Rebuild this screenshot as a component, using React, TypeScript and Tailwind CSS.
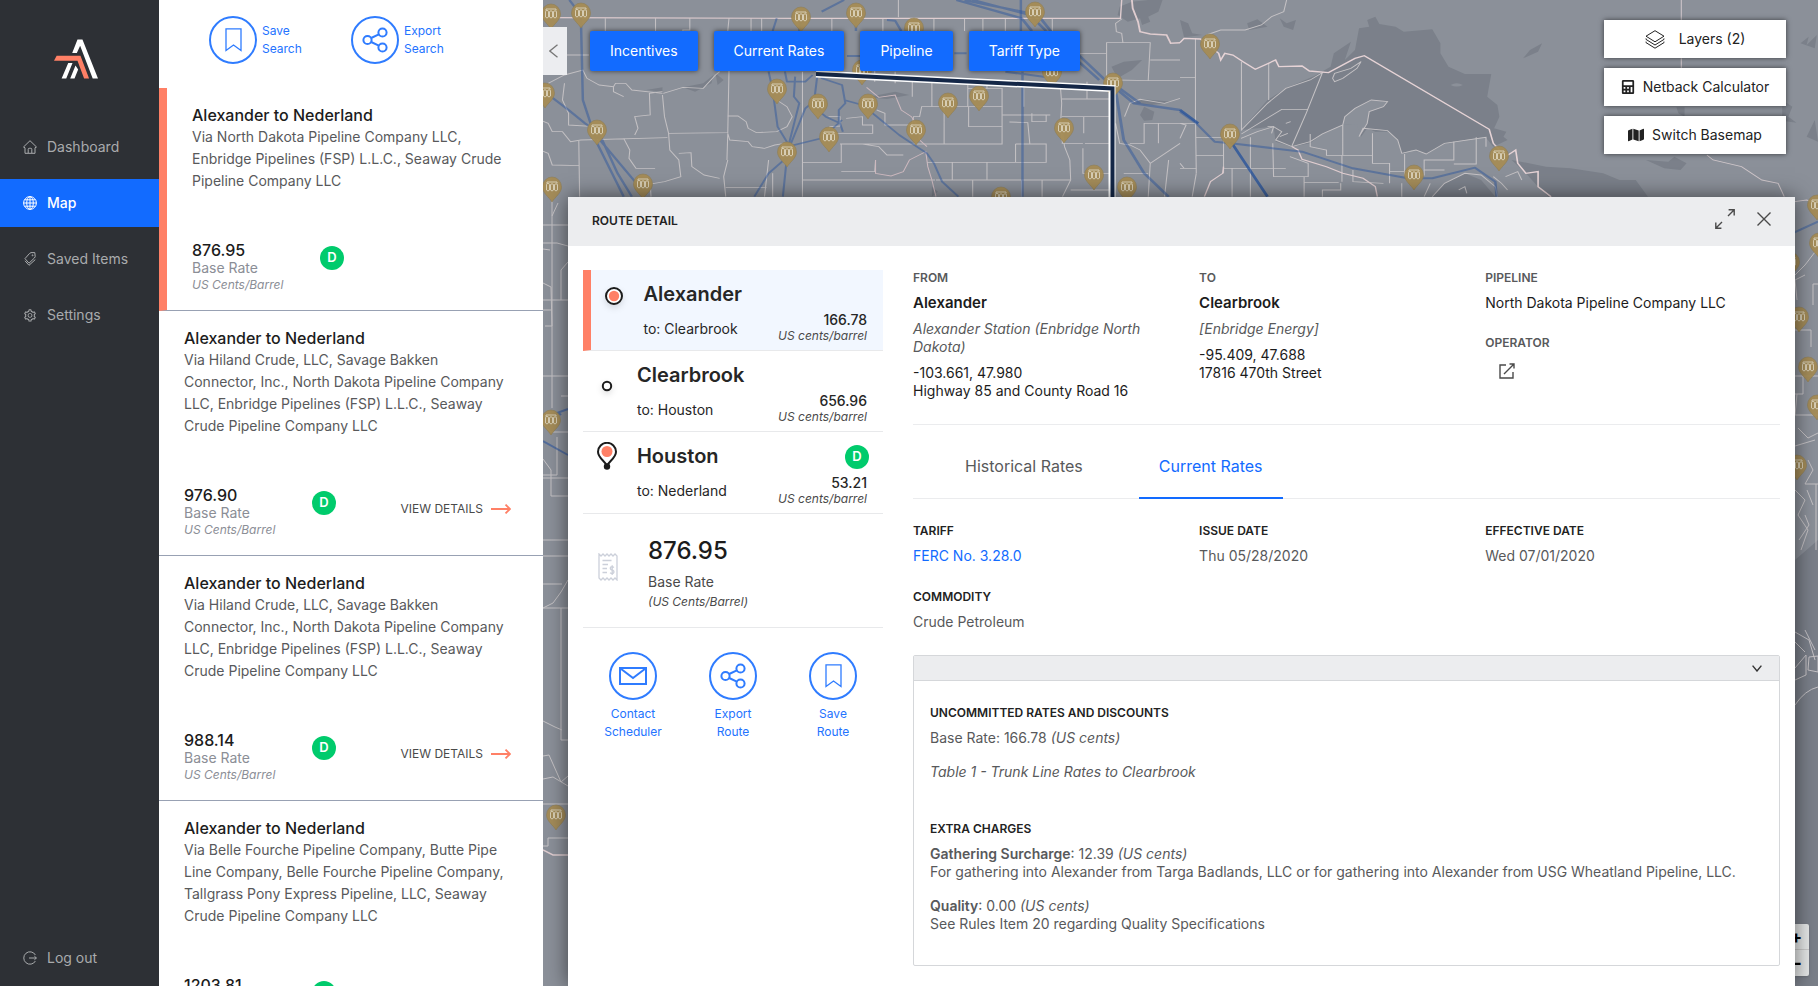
import React, { useState } from 'react';
import { FaCalculator, FaMap } from 'react-icons/fa';
import { AiOutlineSetting } from 'react-icons/ai';

interface RouteItem {
  id: number;
  title: string;
  via: string;
  rate: string;
}

const ROUTES: RouteItem[] = [
  {
    id: 1,
    title: 'Alexander to Nederland',
    via: 'Via North Dakota Pipeline Company LLC, Enbridge Pipelines (FSP) L.L.C., Seaway Crude Pipeline Company LLC',
    rate: '876.95',
  },
  {
    id: 2,
    title: 'Alexander to Nederland',
    via: 'Via Hiland Crude, LLC, Savage Bakken Connector, Inc., North Dakota Pipeline Company LLC, Enbridge Pipelines (FSP) L.L.C., Seaway Crude Pipeline Company LLC',
    rate: '976.90',
  },
  {
    id: 3,
    title: 'Alexander to Nederland',
    via: 'Via Hiland Crude, LLC, Savage Bakken Connector, Inc., North Dakota Pipeline Company LLC, Enbridge Pipelines (FSP) L.L.C., Seaway Crude Pipeline Company LLC',
    rate: '988.14',
  },
  {
    id: 4,
    title: 'Alexander to Nederland',
    via: 'Via Belle Fourche Pipeline Company, Butte Pipe Line Company, Belle Fourche Pipeline Company, Tallgrass Pony Express Pipeline, LLC, Seaway Crude Pipeline Company LLC',
    rate: '1203.81',
  },
];

// Terminal positions on the map canvas
const PINS: [number, number][] = [
  [8, 14], [38, 13], [258, 17], [313, 13], [371, 28], [492, 12], [234, 89], [275, 104],
  [325, 104], [319, 70], [405, 103], [436, 96], [570, 83], [509, 72], [54, 130], [373, 130],
  [521, 128], [286, 137], [244, 152], [100, 184], [9, 187], [551, 175], [584, 187], [458, 197],
  [2, 93], [667, 44], [687, 134], [956, 156], [871, 175], [1274, 205], [1276, 243], [1247, 262],
  [1256, 317], [1265, 367], [1274, 405], [1254, 465], [8, 420], [13, 815],
];

/* ---------- Icons ---------- */

const Logo = () => (
  <svg width="44" height="40" viewBox="162 57 133 118" aria-hidden="true">
    <path fill="#fff" d="M217 98 L233 57 H248 L295 175 H279 L241 76 L231 98 Z" />
    <path fill="#ff8066" d="M162 121 L170 106 H242 L268 175 H253 L233 121 Z" />
    <path fill="#fff" d="M185 175 L205 128 H218 L199 175 Z M211 175 L227 136 L235 148 L224 175 Z" />
  </svg>
);

const HomeIcon = () => (
  <svg width="14" height="14" viewBox="0 0 14 14" fill="none" stroke="currentColor" aria-hidden="true">
    <path d="M.5 7 L7 .7 L13.5 7 L12 7.8 V13.3 H2 V7.8 Z" />
    <path d="M5.2 13 V9.3 Q5.2 8.3 6.2 8.3 H7.8 Q8.8 8.3 8.8 9.3 V13" />
  </svg>
);

const GlobeIcon = () => (
  <svg width="14" height="14" viewBox="0 0 14 14" fill="none" stroke="currentColor" aria-hidden="true">
    <circle cx="7" cy="7" r="6.4" />
    <ellipse cx="7" cy="7" rx="3.3" ry="6.4" />
    <path d="M7 .6 V13.4 M.6 7 H13.4 M1.6 3.8 H12.4 M1.6 10.2 H12.4" />
  </svg>
);

const TagsIcon = () => (
  <svg width="14" height="14" viewBox="0 0 14 14" fill="none" stroke="currentColor" aria-hidden="true">
    <path d="M6.4 1.6 L8 .6 H11.8 L12.2 4.6 L11.4 6 L6 11.2 L2 6.6 Z" />
    <path d="M2 8.8 L6 13.3 L12.3 7.6" />
    <circle cx="9.6" cy="3.3" r=".5" />
  </svg>
);

const LogoutIcon = () => (
  <svg width="14" height="14" viewBox="0 0 14 14" fill="none" stroke="currentColor" aria-hidden="true">
    <path d="M12.4 4 A6.2 6.2 0 1 0 12.4 10 M6 7 H13.4 M11.4 5.2 L13.4 7 L11.4 8.8" />
  </svg>
);

const BookmarkIcon = () => (
  <svg width="17" height="24" viewBox="0 0 17 24" fill="none" stroke="currentColor" strokeWidth="1.3" aria-hidden="true">
    <path d="M1 .8 H16 V22.5 L8.5 17 L1 22.5 Z" />
  </svg>
);

const ShareIcon = () => (
  <svg width="26" height="26" viewBox="0 0 26 26" fill="none" stroke="currentColor" strokeWidth="2" aria-hidden="true">
    <circle cx="5.5" cy="13" r="4.1" />
    <circle cx="20.5" cy="5.5" r="4.1" />
    <circle cx="20.5" cy="20.5" r="4.1" />
    <path d="M9.2 11 L16.8 7.4 M9.2 15 L16.8 18.6" />
  </svg>
);

const MailIcon = () => (
  <svg width="28" height="18" viewBox="0 0 28 18" fill="none" stroke="currentColor" strokeWidth="2" aria-hidden="true">
    <path d="M1 1 H27 V17 H1 Z M1.5 1.5 L14 11 L26.5 1.5" />
  </svg>
);

const ArrowIcon = () => (
  <svg width="20" height="10" viewBox="0 0 20 10" fill="none" stroke="#ff8066" strokeWidth="1.8" aria-hidden="true">
    <path d="M0 5 H19 M14.5 .6 L19 5 L14.5 9.4" />
  </svg>
);

const LayersIcon = () => (
  <svg width="20" height="19" viewBox="0 0 20 19" fill="none" stroke="currentColor" aria-hidden="true">
    <path d="M10 .7 L19 6.2 L10 11.8 L1 6.2 Z" />
    <path d="M1 8.4 L1 9.4 L10 15 L19 9.4 L19 8.4 M1 11.6 L1 12.6 L10 18.2 L19 12.6 L19 11.6" />
  </svg>
);

const ExpandIcon = () => (
  <svg width="20" height="20" viewBox="0 0 20 20" fill="none" stroke="#4a4a4a" strokeWidth="1.4" aria-hidden="true">
    <path d="M13 7 L19 1 M13.6 .8 H19.2 V6.4 M7 13 L1 19 M.8 13.6 V19.2 H6.4" />
  </svg>
);

const CloseIcon = () => (
  <svg width="14" height="14" viewBox="0 0 14 14" fill="none" stroke="#4a4a4a" strokeWidth="1.4" aria-hidden="true">
    <path d="M.5 .5 L13.5 13.5 M13.5 .5 L.5 13.5" />
  </svg>
);

const ExternalIcon = () => (
  <svg width="16" height="16" viewBox="0 0 16 16" fill="none" stroke="#4a4a4a" strokeWidth="1.4" aria-hidden="true">
    <path d="M7 2 H1 V15 H14 V9 M5 11 L15 1 M10.5 1 H15 V5.5" />
  </svg>
);

const ReceiptIcon = () => (
  <svg width="20" height="28" viewBox="0 0 20 28" fill="none" stroke="#ccd0da" strokeWidth="1.3" aria-hidden="true">
    <path d="M1 1 L3 3 L5 1 L7 3 L9 1 L11 3 L13 1 L15 3 L17 1 L19 3 V27 L17 25 L15 27 L13 25 L11 27 L9 25 L7 27 L5 25 L3 27 L1 25 Z" />
    <path d="M4.5 7.5 H13.5 M4.5 11.5 H10 M4.5 15.5 H9 M4.5 19.5 H9" />
    <path d="M16 14.5 Q13.5 12.8 12.4 14.6 Q12 16.5 14 17 Q16.4 17.6 15.8 19.6 Q14.5 21.4 12 19.8 M14.2 12.3 V22" />
  </svg>
);

const StartMarker = () => (
  <svg width="22" height="22" viewBox="0 0 22 22" className="drop-shadow-md" aria-hidden="true">
    <circle cx="11" cy="11" r="8" fill="#fff" stroke="#1c1c1c" strokeWidth="2" />
    <circle cx="11" cy="11" r="5.2" fill="#ff8066" />
  </svg>
);

const StopMarker = () => (
  <svg width="12" height="12" viewBox="0 0 12 12" className="drop-shadow-md" aria-hidden="true">
    <circle cx="6" cy="6" r="4.2" fill="#fff" stroke="#1c1c1c" strokeWidth="2" />
  </svg>
);

const EndMarker = () => (
  <svg width="20" height="28" viewBox="0 0 20 28" aria-hidden="true">
    <path
      d="M10 24 C8 19 1 16 1 9.8 A9 9 0 0 1 19 9.8 C19 16 12 19 10 24 Z"
      fill="#fff"
      stroke="#1c1c1c"
      strokeWidth="2"
    />
    <circle cx="10" cy="9.5" r="5.5" fill="#ff8066" />
    <circle cx="10" cy="24.5" r="3.2" fill="#1c1c1c" />
  </svg>
);

/* ---------- Map ---------- */

const MapCanvas = () => (
  <svg
    className="absolute inset-0 h-full w-full"
    viewBox="0 0 1275 986"
    preserveAspectRatio="xMinYMin slice"
    fill="none"
    aria-hidden="true"
  >
    <defs>
      <g id="pin">
        <path d="M0 15 C-3 10 -9.5 6 -9.5 0 A9.5 10 0 0 1 9.5 0 C9.5 6 3 10 0 15 Z" fill="#a58c55" fillOpacity=".95" stroke="#8f7d55" strokeWidth=".6" />
        <path
          d="M-5 -3.5 V-5 H5 V-3.5 M-5.5 -2.5 Q-5.5 -3.5 -4 -3.5 Q-2.5 -3.5 -2.5 -2.5 V3 Q-4 5 -5.5 3 Z M-1.5 -2.5 Q0 -4 1.5 -2.5 V3 Q0 5 -1.5 3 Z M2.5 -2.5 Q4 -4 5.5 -2.5 V3 Q4 5 2.5 3 Z"
          stroke="#ddd5bd"
          strokeWidth=".9"
        />
      </g>
    </defs>
    <rect width="1275" height="986" fill="#8b9099" />

    {/* Lakes */}
    <g transform="translate(637 0) scale(.4069 .3333)" fill="#7b808a">
      <path d="M150 390 L215 300 L260 265 L330 228 L370 200 L378 160 L420 125 L405 180 L430 150 L440 85 L465 80 L460 60 L480 50 L490 72 L530 80 L550 95 L620 88 L640 130 L640 160 L660 200 L700 222 L765 222 L755 290 L780 315 L785 350 L772 385 L802 395 L795 410 L805 420 L770 440 L750 410 L672 425 L650 432 L605 462 L570 450 L545 460 L535 420 L510 395 L480 395 L460 385 L445 410 L440 370 L400 375 L350 402 L320 430 L275 440 L235 425 L230 380 Z" />
      <path d="M815 480 L900 500 L960 505 L1040 520 L1080 540 L1120 540 L1150 590 L905 590 L880 560 L850 520 Z" />
      <path d="M620 590 L650 550 L700 520 L740 540 L775 590 Z" />
      <path d="M843 175 L860 150 L890 130 L880 155 Z M1145 480 L1200 485 L1215 470 L1245 490 L1230 510 L1190 505 Z M0 60 L20 70 L30 100 L55 105 L10 112 Z M165 70 L190 58 L215 80 L170 90 Z M245 55 L262 70 L285 60 L278 90 L255 80 Z M1525 130 L1545 110 L1540 135 L1565 105 L1560 145 Z M1480 300 L1505 320 L1495 350 L1515 368 L1480 362 Z M1540 410 L1560 360 L1568 425 Z M1220 322 H1240 V350 L1225 340 Z" />
    </g>
    <g transform="translate(637 0) scale(.4069 .3333)" fill="#8b9099">
      <path d="M405 350 L430 325 L470 300 L510 305 L500 320 L465 335 L460 370 L440 410 L436 372 L400 375 Z M665 255 Q680 245 695 255 Q680 264 665 255 Z" />
    </g>
    <g transform="translate(-3 0) scale(.4082 .3333)" fill="#7b808a">
      <path d="M1420 20 L1450 5 L1490 0 H1525 L1515 35 L1490 50 L1495 65 L1475 75 L1470 55 L1440 65 L1415 45 Z M1400 200 L1430 185 L1475 180 L1450 210 L1415 235 Z M1470 345 L1480 320 L1505 335 L1500 360 L1480 362 Z M1445 310 L1480 298 L1550 305 L1500 315 Z" />
      <path d="M260 270 L300 262 L300 275 Z M350 262 L400 250 L425 225 L420 250 L380 275 Z M800 292 L870 275 L905 285 L850 297 Z M960 560 L975 575 L960 590 Z M430 220 L450 240 L435 255 Z" />
    </g>
    <path d="M1252 560 L1275 540 V986 H1252 Z" fill="#7a7f89" />

    {/* County lines, west */}
    <g transform="translate(-3 0) scale(.4082 .3333)" stroke="#c3c0c3" strokeWidth="2.6">
      <path d="M160 55 V110 L210 112 M283 55 V93 M367 55 V90 H350 V93 M463 55 L460 93 M517 55 V93 M543 55 V93 M715 55 V93 M840 55 V93 M965 55 V93 M1040 55 V93 M878 0 V52 M1085 55 V93 M1140 55 V93 M1255 55 V93" />
      <path d="M0 165 H120 M20 250 L60 225 L105 210 L115 235 L145 255 L180 260 L185 250 L210 250 L225 270 L300 280 M60 250 L55 300 L70 340 L70 375 L135 380 M180 260 V275 L205 290 M232 405 L240 385 L232 350 L270 345 L268 280 L300 275" />
      <path d="M300 285 L305 350 L315 400 L460 398 L463 212 M315 400 L318 450 L340 480 L345 530 L305 545 L270 552 L272 590 M0 360 L20 370 L30 395 L55 395 L75 425 L100 420 L312 413 M95 420 L97 590 M0 450 L20 460 L30 495 L97 497 M205 415 L220 450 L218 475 L235 505 L282 505 M340 460 L370 458 L372 500 L402 525 L440 535" />
      <path d="M302 280 L350 262 L400 265 L430 225 L440 215 M460 348 H485 L505 365 L510 385 L530 398 L580 395 L605 380 L618 350 L605 320 L580 300 M460 400 L465 420 L510 425 L520 440 L550 445 L575 435 L600 430 M460 480 L450 530 L455 590 M550 590 L560 480 M555 562 L455 562 M570 590 V520 M460 400 L458 480" />
      <path d="M643 215 V590 M643 540 H968 M643 487 H738 V432 M738 515 H820 L822 480 M707 350 L735 350 V378 L710 380 L705 400 H815 V375 L790 375 V350 L750 355 M752 432 H1132 V320 H935 L930 350 H915 L912 375 H845 V340 L825 330 M735 432 H790 L830 440 L850 465 L890 465" />
      <path d="M822 480 V520 L860 528 L890 515 L905 480 L945 455 L950 500 L960 540 L970 590 M800 262 L830 292 L870 285 L885 330 L910 350 L925 380 L930 420 L948 440" stroke="#cdb9bf" />
      <path d="M1132 320 V265 L1048 265 M1132 380 L1050 380 V320 M990 320 V432 M1048 245 V320 M948 487 H1170 M1010 487 V540 M1095 487 V540 M1165 432 V487 H1240 V432 H1165 M970 540 H1300 M1150 366 L1195 368 L1200 432 M1205 340 V365 H1240 L1240 345 M1132 345 H1250 M1180 540 V590 M1230 540 V590 M1060 540 V590 M1250 245 L1275 262 L1278 310 L1275 380 L1280 430" />
      <path d="M1280 400 L1285 440 L1298 480 L1300 540 L1280 590 M1278 350 H1395 M1278 297 H1395 M1332 350 V400 M1335 430 H1395 M1330 445 V520 H1395 M1278 430 H1330 M1340 245 V295 M1300 570 H1395 M1340 297 V260" />
      <path d="M1410 240 L1490 242 L1495 128 L1388 128 V245 M1425 57 L1410 70 L1412 95 L1425 100 L1428 128 M1490 242 H1568 M1495 180 H1568 M1445 430 H1480 V370 H1568 M1410 370 L1420 430 L1445 435 L1470 450 L1495 490 L1568 430 M1495 490 L1490 590 M1432 350 L1445 310 L1470 298 L1530 310 L1568 295 M1430 520 H1490 M1515 370 V430 M1540 480 L1530 590" />
      <path d="M820 200 V245 M870 215 V250 M912 235 V290 M960 235 V320 M1095 245 V265 M1185 255 V320 M1320 160 H1350 L1388 160" />
      {/* International border */}
      <path d="M0 53 L640 55 L1422 55 L1425 0" stroke="#e0cdd0" strokeWidth="3.4" />
      <path d="M1450 0 L1452 25 L1465 65 L1470 95 L1495 102 L1535 105 L1545 130 L1568 128" stroke="#e0cdd0" strokeWidth="4.5" />
    </g>

    {/* Great lakes area */}
    <g transform="translate(637 0) scale(.4069 .3333)" stroke="#c5c2c5" strokeWidth="2.6">
      <path d="M65 105 L100 90 L160 90 L200 75 L225 50 L255 35 L262 0 M38 115 V350 L40 520 M0 233 H38 M151 185 V390 L215 310 L260 265 L320 240 L350 218 L310 340 L275 438 M218 190 V300 M151 402 L250 328 H315 M40 412 H107 V520 M40 466 H107 M0 370 H40 M0 370 L15 375 L0 415" />
      <path d="M150 415 L190 395 L230 380 L250 395 L235 420 L275 440 L320 425 L350 402 L400 375 L405 350 L430 325 L470 300 L510 305 L500 320 L465 335 L460 370 L440 410 L450 385 L510 392 L535 420 L545 460 L580 450 L605 462 L650 430 L752 412 V440" />
      <path d="M320 402 V440 L360 450 V466 H473 V400 M400 375 L400 466 M398 466 V545 M473 466 V490 H515 V550 M552 462 V525 H600 V480 H673 V425 M728 412 V492 H673 M600 480 V510 H650 M228 430 L230 530 H315 V490 L270 470 M173 412 V590 M107 505 H260 M128 505 V590 M305 530 V590 M305 547 H390 M40 505 H0 M40 520 L30 590 M0 490 L10 505 M350 590 V570 H395 V550" />
      <path d="M425 510 V545 L500 550 M515 515 L560 515 M545 550 V590 M375 235 L380 220 L420 205 L445 185 L435 205 L400 235 L380 245 Z M620 590 L650 550 L700 520 L740 525 L775 560 L780 590 M685 570 L700 560 L705 580 M600 590 L615 550 M800 530 L830 515 L840 540 M770 530 L790 550 L805 570 M215 380 H230 L225 400 M260 370 L272 365 M245 410 L265 400" />
      <path d="M1232 0 V60 M1232 175 V205 M1295 465 L1310 480 L1380 500 L1430 540 L1470 550 L1485 590 M1510 605 L1540 600 L1568 612" stroke="#cfc6ca" />
      <path d="M107 500 L105 520 L75 545 L60 590 M275 440 L290 450 L300 478 L360 500 L400 520 L450 535 L480 560 L485 590" stroke="#e0cdd0" strokeWidth="3.4" />
      <path d="M0 128 L10 115 L50 117 L95 160 L100 180 L110 160 L130 165 L155 185 L185 208 L235 180 L243 200 L300 198 L318 213 L365 218 L430 175 L453 167 L760 388 L770 430 L800 470 L825 450 L830 490 L850 520 L880 515 L880 560 L912 590" stroke="#e6d3d6" strokeWidth="4" />
    </g>

    {/* West strip */}
    <g stroke="#c5c2c5" strokeWidth="1">
      <path d="M9 200 V408 M9 216 L15 203 M0 225 H25 M0 243 H14 L25 246 M0 300 H25 M0 310 H9 M0 249 L7 250 M0 283 L8 287 L9 326 H2 M0 376 H25 M18 396 H25 M0 424 L8 432 H25 M14 437 V475 H0 M0 459 L8 470 V496 H25 M0 478 H25 M0 540 H25 M0 556 H25 M0 584 H19 M0 608 L10 603 L18 592 L25 580 M0 608 H25 M18 608 V740 H25 M0 721 L12 727 L19 730 M0 756 L6 755 L18 782 L25 776 M0 779 L10 777 L25 786 M0 804 H25 M0 846 H5 V838 H25 M18 300 V270 L25 262" />
      <path d="M0 850 L10 855 H25" stroke="#e0cdd0" strokeWidth="1.4" />
    </g>

    {/* East strip */}
    <g stroke="#c5c2c5" strokeWidth="1">
      <path d="M1252 275 L1262 265 L1272 252 M1252 330 H1268 V347 M1252 376 H1275 M1260 376 V394 H1252 M1254 394 L1252 415 H1275 M1255 428 L1265 438 L1275 433 M1252 446 L1272 440 M1265 460 L1270 470 L1262 484 H1275 M1270 305 V284 H1275 M1254 300 L1252 280 L1262 275 M1273 484 V550 M1252 490 L1262 500 L1255 515 L1265 530 L1258 550 M1264 490 L1270 505 M1256 540 L1266 525 L1262 515" />
      <path d="M1252 632 L1266 640 L1272 660 M1252 642 L1262 652 M1262 630 L1272 650 M1252 668 L1263 655 V675 L1252 680 M1266 657 L1275 656 V672 L1265 670 Z M1252 705 Q1262 690 1275 687" />
    </g>

    {/* Pipelines */}
    <g transform="translate(-3 0) scale(.4082 .3333)" stroke="#2f579e" strokeOpacity=".5" strokeWidth="5" strokeLinejoin="round">
      <path d="M72 0 L100 45 L105 300 L140 430 L205 590 M0 265 L70 330 L110 370 L145 400 L190 520 L225 590 M140 410 L250 570" strokeWidth="6" />
      <path d="M580 55 L570 93 M560 215 L570 270 L582 380 L607 430 L605 470 M607 470 L560 520 L525 590 M605 470 L595 590 M605 460 L650 325 L685 290 M625 230 L622 290 L635 310 L605 455 M600 215 L605 245 H650 L668 225 M680 220 L670 320 L700 350 L735 370 L742 395 M690 215 V235 L740 255 L748 310 L732 330 V370 M745 300 L790 315 L825 350 L880 405 L948 460 L965 490 L985 545 L1025 590 M607 440 L640 430 L690 415 L740 360" />
      <path d="M690 35 L745 0 M774 45 V93 M850 60 L870 62 L885 93 M752 168 H785 M1015 160 H1045 M1178 0 V93 M1182 215 V590 M1140 215 L1260 235 M640 55 L635 93" strokeWidth="6" />
      <path d="M1020 0 L1180 55 L1205 93 M1060 0 L1200 45 L1240 93 M1040 0 L1220 45 L1262 110 M1315 160 L1380 235 L1410 260 M1315 180 L1370 240 M1405 260 L1455 310 L1568 330 M1410 270 L1430 420 L1480 520 L1540 590 M1420 265 L1470 310" strokeWidth="7" />
    </g>
    <g transform="translate(637 0) scale(.4069 .3333)" stroke="#2f579e" strokeOpacity=".5" strokeLinejoin="round">
      <path d="M0 335 L40 370 L85 425 L125 430 L300 455 L425 505 L560 535 H620 L725 503 L775 545 L778 590 M1510 697 L1568 665" strokeWidth="6" />
      <path d="M0 330 L45 370 M125 425 L215 590" strokeWidth="7" stroke="#23509b" strokeOpacity=".75" />
    </g>
    <path d="M0 418 L25 409 M0 441 L25 455 M5 425 Q12 408 18 415" stroke="#2f579e" strokeOpacity=".6" strokeWidth="2" />

    {PINS.map(([x, y]) => (
      <use key={`${x}-${y}`} href="#pin" x={x} y={y} />
    ))}

    {/* Selected route */}
    <path d="M273 74 L569 88.500 V200" stroke="#fff" strokeWidth="7" />
    <path d="M273 74 L569.500 88.500 V200" stroke="#142747" strokeWidth="4" />
  </svg>
);

/* ---------- Shared pieces ---------- */

const DiscountBadge: React.FC<{ className?: string }> = ({ className = '' }) => (
  <span
    className={`flex h-6 w-6 shrink-0 items-center justify-center rounded-full bg-[#00cb6c] text-[13px] font-semibold text-white ${className}`}
  >
    D
  </span>
);

const IconCircle: React.FC<{ children: React.ReactNode }> = ({ children }) => (
  <span className="flex h-12 w-12 shrink-0 items-center justify-center rounded-full border-2 border-[#2f7cff] text-[#2f7cff]">
    {children}
  </span>
);

const Field: React.FC<{ label: string; muted?: boolean; children: React.ReactNode }> = ({
  label,
  muted = false,
  children,
}) => (
  <div>
    <h3 className={`text-xs font-semibold uppercase ${muted ? 'text-[#58595b]' : 'text-[#222]'}`}>{label}</h3>
    {children}
  </div>
);

/* ---------- Sidebar ---------- */

const NAV = [
  { label: 'Dashboard', icon: <HomeIcon /> },
  { label: 'Map', icon: <GlobeIcon />, active: true },
  { label: 'Saved Items', icon: <TagsIcon /> },
  { label: 'Settings', icon: <AiOutlineSetting size={15} /> },
];

const Sidebar = () => (
  <aside className="flex w-[159px] shrink-0 flex-col bg-[#2d3035] pb-1 text-sm text-[#a9abad]">
    <a href="#home" aria-label="Home" className="mb-11 flex justify-center pt-[39px] pr-[7px]">
      <Logo />
    </a>
    <nav className="flex flex-col gap-2">
      {NAV.map((item) => (
        <a
          key={item.label}
          href="#nav"
          className={`flex h-12 items-center gap-2.5 pl-[23px] ${item.active ? 'bg-[#126bff] font-medium text-white' : ''}`}
        >
          <span className="flex w-3.5 justify-center">{item.icon}</span>
          {item.label}
        </a>
      ))}
    </nav>
    <a href="#logout" className="mt-auto flex h-12 items-center gap-2.5 pl-[23px]">
      <LogoutIcon />
      Log out
    </a>
  </aside>
);

/* ---------- Results list ---------- */

const RouteCard: React.FC<{ route: RouteItem; selected: boolean; onSelect: () => void }> = ({
  route,
  selected,
  onSelect,
}) => (
  <li
    className={`border-b border-b-[#98a1b3] py-4 pr-8 pl-[25px] ${selected ? 'border-l-8 border-l-[#ff8066]' : ''}`}
  >
    <h2 className="text-base leading-[22px] font-medium text-[#1c1c1c]">{route.title}</h2>
    <p className="text-sm leading-[22px] text-[#58595b]">{route.via}</p>
    <div className="mt-12 flex">
      <div className="w-32">
        <div className="text-base leading-5 font-medium text-[#1c1c1c]">{route.rate}</div>
        <div className="text-sm leading-4 text-[#8b8e96]">Base Rate</div>
        <div className="text-xs leading-[18px] text-[#8b8e96] italic">US Cents/Barrel</div>
      </div>
      <DiscountBadge className="mt-1.5" />
      {!selected && (
        <button type="button" onClick={onSelect} className="ml-auto flex h-12 items-center gap-2 text-xs text-[#4a4a4a]">
          VIEW DETAILS
          <ArrowIcon />
        </button>
      )}
    </div>
  </li>
);

const RouteList = () => {
  const [selected, setSelected] = useState(1);

  return (
    <section className="relative flex w-96 shrink-0 flex-col overflow-hidden bg-white">
      <div className="flex shrink-0 gap-[46px] pt-4 pb-6 pl-[50px] text-xs leading-[18px] text-[#2373ff]">
        <button type="button" className="flex w-24 items-center gap-[5px] text-left">
          <IconCircle>
            <BookmarkIcon />
          </IconCircle>
          <span>
            Save
            <br />
            Search
          </span>
        </button>
        <button type="button" className="flex w-24 items-center gap-[5px] text-left">
          <IconCircle>
            <ShareIcon />
          </IconCircle>
          <span>
            Export
            <br />
            Search
          </span>
        </button>
      </div>
      <ul>
        {ROUTES.map((route) => (
          <RouteCard
            key={route.id}
            route={route}
            selected={route.id === selected}
            onSelect={() => setSelected(route.id)}
          />
        ))}
      </ul>
    </section>
  );
};

/* ---------- Map toolbar ---------- */

const MapToolbar = () => (
  <div className="relative flex h-[197px] shrink-0 items-start text-sm">
    <button
      type="button"
      aria-label="Collapse results"
      className="mt-[27px] flex h-12 w-6 items-center justify-center bg-[#ecedf0] pr-1"
    >
      <svg width="9" height="14" viewBox="0 0 9 14" fill="none" stroke="#777" strokeWidth="1.3" aria-hidden="true">
        <path d="M8.500 .7 L.8 7 L8.500 13.300" />
      </svg>
    </button>
    <div className="mt-[31px] ml-[23px] flex gap-4">
      {['Incentives', 'Current Rates', 'Pipeline', 'Tariff Type'].map((label) => (
        <button
          key={label}
          type="button"
          className="h-10 rounded-xs bg-[#126bff] px-5 text-white shadow-[0_0_5px_rgba(0,0,0,0.6)]"
        >
          {label}
        </button>
      ))}
    </div>
    <div className="mt-5 mr-8 ml-auto flex w-[182px] flex-col gap-2.5 text-[#222]">
      <button type="button" className="flex h-[38px] items-center justify-center gap-3.5 bg-white shadow-[0_0_5px_rgba(0,0,0,0.6)]">
        <LayersIcon />
        Layers (2)
      </button>
      <button type="button" className="flex h-[38px] items-center justify-center gap-2 bg-white shadow-[0_0_5px_rgba(0,0,0,0.6)]">
        <FaCalculator size={14} />
        Netback Calculator
      </button>
      <button type="button" className="flex h-[38px] items-center justify-center gap-2 bg-white shadow-[0_0_5px_rgba(0,0,0,0.6)]">
        <FaMap size={16} />
        Switch Basemap
      </button>
    </div>
  </div>
);

/* ---------- Route detail ---------- */

const LEGS = [
  { from: 'Alexander', to: 'Clearbrook', rate: '166.78', icon: <StartMarker />, discount: false },
  { from: 'Clearbrook', to: 'Houston', rate: '656.96', icon: <StopMarker />, discount: false },
  { from: 'Houston', to: 'Nederland', rate: '53.21', icon: <EndMarker />, discount: true },
];

const ICON_OFFSETS = ['pt-[15px]', 'pt-[29px]', 'pt-2.5'];

const RouteSummary = () => {
  const [activeLeg, setActiveLeg] = useState(0);

  return (
    <div className="w-[300px] shrink-0">
      {LEGS.map((leg, i) => (
        <button
          key={leg.from}
          type="button"
          onClick={() => setActiveLeg(i)}
          className={`grid min-h-[81px] w-full grid-cols-[19%_1fr_auto] border-b border-b-[#e8e9eb] pr-4 text-left ${
            i === activeLeg ? 'border-l-8 border-l-[#ff8066] bg-[#f2f7ff]' : ''
          }`}
        >
          <span className={`flex h-full items-start justify-center pr-1.5 ${ICON_OFFSETS[i]}`}>{leg.icon}</span>
          <span className="pt-3">
            <span className="block text-xl leading-6 font-semibold text-[#262626]">{leg.from}</span>
            <span className="mt-3.5 block text-sm leading-[18px] text-[#262626]">to: {leg.to}</span>
          </span>
          <span className={`flex h-full flex-col items-end justify-end pb-1.5 ${leg.discount ? 'pt-[13px]' : ''}`}>
            {leg.discount && <DiscountBadge className="-mr-0.5 mb-1.5" />}
            <span className="text-sm leading-4 font-medium text-[#262626]">{leg.rate}</span>
            <span className="text-xs leading-4 text-[#4a4a4a] italic">US cents/barrel</span>
          </span>
        </button>
      ))}

      <div className="flex items-start border-b border-[#e8e9eb] pt-[21px] pb-4 pl-[15px]">
        <span className="pt-[18px]">
          <ReceiptIcon />
        </span>
        <div className="pl-[30px]">
          <div className="text-2xl font-medium text-[#1c1c1c]">876.95</div>
          <div className="mt-1 text-sm leading-[22px] text-[#4a4a4a]">Base Rate</div>
          <div className="text-xs leading-[18px] text-[#4a4a4a] italic">(US Cents/Barrel)</div>
        </div>
      </div>

      <div className="grid grid-cols-3 pt-6 text-xs leading-[18px] text-[#2373ff]">
        <button type="button" className="flex flex-col items-center gap-[5px]">
          <IconCircle>
            <MailIcon />
          </IconCircle>
          <span>
            Contact
            <br />
            Scheduler
          </span>
        </button>
        <button type="button" className="flex flex-col items-center gap-[5px]">
          <IconCircle>
            <ShareIcon />
          </IconCircle>
          <span>
            Export
            <br />
            Route
          </span>
        </button>
        <button type="button" className="flex flex-col items-center gap-[5px]">
          <IconCircle>
            <BookmarkIcon />
          </IconCircle>
          <span>
            Save
            <br />
            Route
          </span>
        </button>
      </div>
    </div>
  );
};

const TABS = ['Historical Rates', 'Current Rates'];

const LegDetail = () => {
  const [tab, setTab] = useState('Current Rates');

  return (
    <div className="min-w-0 flex-1 text-sm leading-[18px] text-[#58595b]">
      <div className="grid grid-cols-[33%_33%_34%] border-b border-[#ebecee] pb-6">
        <Field label="From" muted>
          <p className="mt-[7px] text-[15px] leading-5 font-semibold text-[#1c1c1c]">Alexander</p>
          <p className="mt-[7px] pr-8 italic">Alexander Station (Enbridge North Dakota)</p>
          <p className="mt-2 text-[#1c1c1c]">-103.661, 47.980</p>
          <p className="text-[#1c1c1c]">Highway 85 and County Road 16</p>
        </Field>
        <Field label="To" muted>
          <p className="mt-[7px] text-[15px] leading-5 font-semibold text-[#1c1c1c]">Clearbrook</p>
          <p className="mt-[7px] italic">[Enbridge Energy]</p>
          <p className="mt-2 text-[#1c1c1c]">-95.409, 47.688</p>
          <p className="text-[#1c1c1c]">17816 470th Street</p>
        </Field>
        <div>
          <Field label="Pipeline" muted>
            <p className="mt-[7px] leading-5 text-[#1c1c1c]">North Dakota Pipeline Company LLC</p>
          </Field>
          <div className="mt-[22px]">
            <Field label="Operator" muted>
              <a href="#operator" aria-label="Open operator page" className="mt-3 ml-3.5 inline-block">
                <ExternalIcon />
              </a>
            </Field>
          </div>
        </div>
      </div>

      <div role="tablist" className="flex gap-9 border-b border-[#ebecee] pt-3 pl-8 text-base">
        {TABS.map((label) => (
          <button
            key={label}
            type="button"
            role="tab"
            aria-selected={tab === label}
            onClick={() => setTab(label)}
            className={`-mb-px h-[62px] border-b-2 px-5 pb-0.5 ${
              tab === label ? 'border-[#126bff] text-[#126bff]' : 'border-transparent'
            }`}
          >
            {label}
          </button>
        ))}
      </div>

      <div className="grid grid-cols-[33%_33%_34%] gap-y-6 pt-6">
        <Field label="Tariff">
          <a href="#tariff" className="mt-2 block text-[#126bff]">
            FERC No. 3.28.0
          </a>
        </Field>
        <Field label="Issue Date">
          <p className="mt-2">Thu 05/28/2020</p>
        </Field>
        <Field label="Effective Date">
          <p className="mt-2">Wed 07/01/2020</p>
        </Field>
        <Field label="Commodity">
          <p className="mt-2">Crude Petroleum</p>
        </Field>
      </div>

      <div className="mt-6 rounded-xs border border-[#d5d7da]">
        <button
          type="button"
          aria-label="Toggle rates"
          className="flex h-[25px] w-full items-center justify-end border-b border-[#d5d7da] bg-[#ecedef] pr-[17px]"
        >
          <svg width="10" height="7" viewBox="0 0 10 7" fill="none" stroke="#333" strokeWidth="1.4" aria-hidden="true">
            <path d="M.6 .6 L5 6 L9.400 .6" />
          </svg>
        </button>
        <div className="px-4 pt-6 pb-8">
          <Field label="Uncommitted Rates and Discounts">
            <p className="mt-2">
              Base Rate: 166.78 <em>(US cents)</em>
            </p>
            <p className="mt-4 italic">Table 1 - Trunk Line Rates to Clearbrook</p>
          </Field>
          <div className="mt-10">
            <Field label="Extra Charges">
              <p className="mt-2">
                <strong className="font-semibold">Gathering Surcharge</strong>: 12.39 <em>(US cents)</em>
                <br />
                For gathering into Alexander from Targa Badlands, LLC or for gathering into Alexander from USG
                Wheatland Pipeline, LLC.
              </p>
              <p className="mt-4">
                <strong className="font-semibold">Quality</strong>: 0.00 <em>(US cents)</em>
                <br />
                See Rules Item 20 regarding Quality Specifications
              </p>
            </Field>
          </div>
        </div>
      </div>
    </div>
  );
};

const RouteDetail = () => (
  <section className="relative mr-[23px] ml-[25px] flex-1 bg-white shadow-[0_0_20px_rgba(0,0,0,0.55)]">
    <header className="flex h-[49px] items-center bg-[#ecedef] pr-6 pb-0.5 pl-6">
      <h1 className="text-xs font-semibold text-[#222]">ROUTE DETAIL</h1>
      <button type="button" aria-label="Expand" className="mr-[22px] ml-auto pb-1">
        <ExpandIcon />
      </button>
      <button type="button" aria-label="Close" className="pb-1">
        <CloseIcon />
      </button>
    </header>
    <div className="flex gap-[30px] px-[15px] pt-6">
      <RouteSummary />
      <LegDetail />
    </div>
  </section>
);

export default function App() {
  return (
    <div className="flex h-screen overflow-hidden bg-white font-['Inter',sans-serif]">
      <Sidebar />
      <RouteList />
      <main className="relative flex min-w-0 flex-1 flex-col overflow-hidden">
        <MapCanvas />
        <div className="absolute right-[9px] bottom-[10px] flex w-[26px] flex-col rounded-xs bg-[#e6e8e8] text-lg font-bold text-black shadow">
          <button type="button" aria-label="Zoom in" className="h-[26px] border-b border-[#ccc] leading-none">
            +
          </button>
          <button type="button" aria-label="Zoom out" className="h-[26px] leading-none">
            −
          </button>
        </div>
        <MapToolbar />
        <RouteDetail />
      </main>
    </div>
  );
}
